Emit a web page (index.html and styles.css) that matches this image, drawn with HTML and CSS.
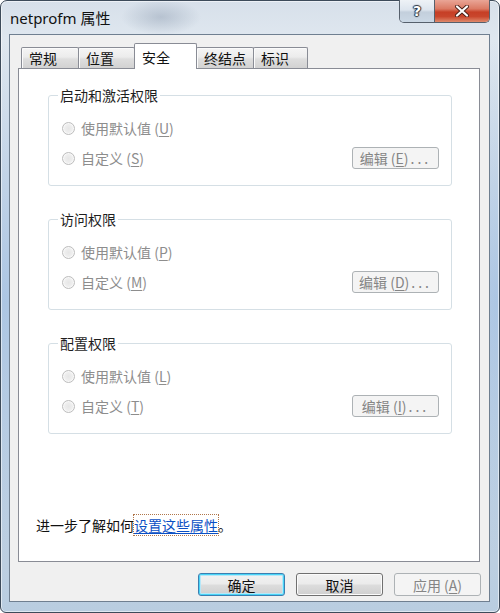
FILE: index.html
```html
<!DOCTYPE html>
<html lang="zh-CN">
<head>
<meta charset="utf-8">
<title>netprofm 属性</title>
<link rel="stylesheet" href="styles.css">
</head>
<body>
<div class="window">
  <div class="titlebar">
    <span class="title">netprofm 属性</span>
    <div class="caption-btns">
      <div class="cbtn help">?</div>
      <div class="cbtn close">
        <svg width="16" height="12" viewBox="0 0 16 12">
          <path d="M3 1.5 L13 10.5 M13 1.5 L3 10.5" stroke="#4a2018" stroke-width="4" stroke-linecap="round"/>
          <path d="M3 1.5 L13 10.5 M13 1.5 L3 10.5" stroke="#ffffff" stroke-width="2.2" stroke-linecap="round"/>
        </svg>
      </div>
    </div>
  </div>
  <div class="client">
    <div class="tabs">
      <div class="tab t1">常规</div>
      <div class="tab t2">位置</div>
      <div class="tab t3 selected">安全</div>
      <div class="tab t4">终结点</div>
      <div class="tab t5">标识</div>
    </div>
    <div class="panel">
      <div class="groups">
        <fieldset class="group">
          <legend>启动和激活权限</legend>
          <div class="options">
            <div class="row"><span class="opt"><span class="radio"></span>使用默认值 (<u>U</u>)</span></div>
            <div class="row"><span class="opt"><span class="radio"></span>自定义 (<u>S</u>)</span><span class="btn disabled edit">编辑 (<u>E</u>)<span class="dots">...</span></span></div>
          </div>
        </fieldset>
        <fieldset class="group">
          <legend>访问权限</legend>
          <div class="options">
            <div class="row"><span class="opt"><span class="radio"></span>使用默认值 (<u>P</u>)</span></div>
            <div class="row"><span class="opt"><span class="radio"></span>自定义 (<u>M</u>)</span><span class="btn disabled edit">编辑 (<u>D</u>)<span class="dots">...</span></span></div>
          </div>
        </fieldset>
        <fieldset class="group">
          <legend>配置权限</legend>
          <div class="options">
            <div class="row"><span class="opt"><span class="radio"></span>使用默认值 (<u>L</u>)</span></div>
            <div class="row"><span class="opt"><span class="radio"></span>自定义 (<u>T</u>)</span><span class="btn disabled edit">编辑 (<u>I</u>)<span class="dots">...</span></span></div>
          </div>
        </fieldset>
      </div>
      <p class="more">进一步了解如何<a class="link" href="#">设置这些属性</a>。</p>
    </div>
    <div class="buttons">
      <span class="btn default">确定</span>
      <span class="btn">取消</span>
      <span class="btn disabled">应用 (<u>A</u>)</span>
    </div>
  </div>
</div>
</body>
</html>
```

FILE: styles.css
```css
* { box-sizing: border-box; }
html, body { margin: 0; padding: 0; }
body {
  width: 500px;
  height: 613px;
  overflow: hidden;
  font-family: "Noto Sans CJK SC", "Noto Sans", sans-serif;
  font-size: 14px;
  background: #ffffff;
}
.window {
  width: 500px;
  height: 613px;
  display: flex;
  flex-direction: column;
  padding: 0 9px 10px 8px;
  border: 1px solid #3d4b5a;
  border-radius: 7px 7px 6px 6px;
  background:
    radial-gradient(ellipse 40px 18px at 160px 16px, rgba(140,155,175,0.45), rgba(140,155,175,0)),
    radial-gradient(ellipse 60px 260px at 4px 300px, rgba(150,185,225,0.6), rgba(150,185,225,0)),
    radial-gradient(ellipse 60px 260px at 496px 300px, rgba(150,185,225,0.6), rgba(150,185,225,0)),
    linear-gradient(to bottom, #d7e0ea 0%, #dfe7ef 6%, #cdd9e6 50%, #b9cde0 100%);
  box-shadow: inset 0 0 0 1px rgba(255,255,255,0.55);
}
.titlebar {
  height: 33px;
  flex: none;
  display: flex;
  justify-content: space-between;
  align-items: flex-start;
}
.title {
  font-family: "Noto Sans", "Noto Sans CJK SC", sans-serif;
  font-size: 15px;
  line-height: 20px;
  padding: 7px 0 0 1px;
  color: #111;
}
.caption-btns {
  display: flex;
  margin-top: -1px;
  height: 23px;
  border: 1px solid #56606c;
  border-top: none;
  border-radius: 0 0 5px 5px;
  overflow: hidden;
}
.cbtn {
  height: 22px;
  display: flex;
  align-items: center;
  justify-content: center;
}
.help {
  width: 35px;
  border-right: 1px solid #56606c;
  background: linear-gradient(to bottom, #eef2f6 0%, #dde5ee 45%, #c3cfdc 55%, #cbd8e5 100%);
  font-family: "DejaVu Sans", sans-serif;
  font-weight: bold;
  font-size: 14px;
  color: #fff;
  text-shadow: 0 0 1px #2c3440, 1px 0 1px #2c3440, -1px 0 1px #2c3440, 0 1px 1px #2c3440, 0 -1px 1px #2c3440;
}
.close {
  width: 54px;
  background: linear-gradient(to bottom, #e9a596 0%, #db7a64 40%, #c63f26 55%, #c9462c 75%, #df8a6c 100%);
}
.client {
  flex: 1;
  display: flex;
  flex-direction: column;
  background: #f0f0f0;
  border: 1px solid #6f7f90;
  padding: 8px 9px 0 8px;
}
.tabs {
  display: flex;
  align-items: flex-start;
  height: 25px;
  padding-left: 3px;
  position: relative;
  z-index: 1;
}
.tab {
  height: 21px;
  margin-top: 4px;
  margin-left: -1px;
  padding: 0 0 0 7px;
  line-height: 20px;
  color: #111;
  border: 1px solid #898c95;
  border-bottom: none;
  border-radius: 2px 2px 0 0;
  background: linear-gradient(to bottom, #f5f5f5 0%, #ececec 45%, #dedede 55%, #d2d2d2 100%);
  box-shadow: inset 1px 1px 0 #fbfbfb;
}
.tab:first-child { margin-left: 0; }
.t1 { width: 58px; }
.t2 { width: 57px; }
.t3 { width: 63px; }
.t4 { width: 58px; }
.t5 { width: 55px; }
.tab.selected {
  height: 26px;
  margin-top: 0;
  padding-top: 3px;
  background: #ffffff;
  box-shadow: none;
}
.panel {
  height: 494px;
  flex: none;
  background: #ffffff;
  border: 1px solid #898c95;
  padding: 16px 27px 26px 17px;
  display: flex;
  flex-direction: column;
}
.groups {
  display: flex;
  flex-direction: column;
  gap: 23px;
  padding-left: 12px;
}
.group {
  margin: 0;
  min-width: 0;
  padding: 0 12px 12px 9px;
  border: 1px solid #d5dfe5;
  border-radius: 3px;
}
.group legend {
  padding: 0 2px;
  line-height: 20px;
  color: #1e1e1e;
}
.options { padding-top: 8px; }
.row {
  height: 30px;
  display: flex;
  align-items: center;
  justify-content: space-between;
}
.opt {
  display: flex;
  align-items: center;
  color: #8d8d8d;
  line-height: 20px;
}
.radio {
  width: 13px;
  height: 13px;
  margin: 0 6px 0 4px;
  border-radius: 50%;
  border: 1px solid #bdbdbd;
  background: radial-gradient(circle at 50% 50%, #e6e6e6 0%, #efefef 55%, #f6f6f6 100%);
  box-shadow: inset 0 0 0 1px #f8f8f8;
}
u { text-decoration: underline; text-underline-offset: 2px; }
.btn {
  width: 87px;
  height: 23px;
  display: flex;
  align-items: center;
  justify-content: center;
  line-height: 20px;
  color: #111;
  border: 1px solid #707070;
  border-radius: 3px;
  background: linear-gradient(to bottom, #f2f2f2 0%, #ebebeb 48%, #dddddd 52%, #cfcfcf 100%);
  box-shadow: inset 0 0 0 1px #fbfbfb;
}
.btn.edit { height: 22px; }
.btn.disabled {
  color: #858585;
  border-color: #adb2b5;
  background: #f4f4f4;
  box-shadow: none;
}
.dots { letter-spacing: 3px; margin-left: 2px; }
.btn.default {
  border-color: #3c7fb1;
  box-shadow: inset 0 0 0 1px #48d4f7, inset 0 0 0 2px #b7e7f8;
}
.more {
  margin: auto 0 0 0;
  line-height: 20px;
  color: #111;
}
.link {
  color: #0a4fc4;
  text-decoration: underline;
  text-underline-offset: 2px;
  outline: 1px dotted #b0764a;
  outline-offset: 0;
}
.buttons {
  display: flex;
  justify-content: flex-end;
  gap: 11px;
  padding-top: 11px;
  margin-right: -1px;
}
```
